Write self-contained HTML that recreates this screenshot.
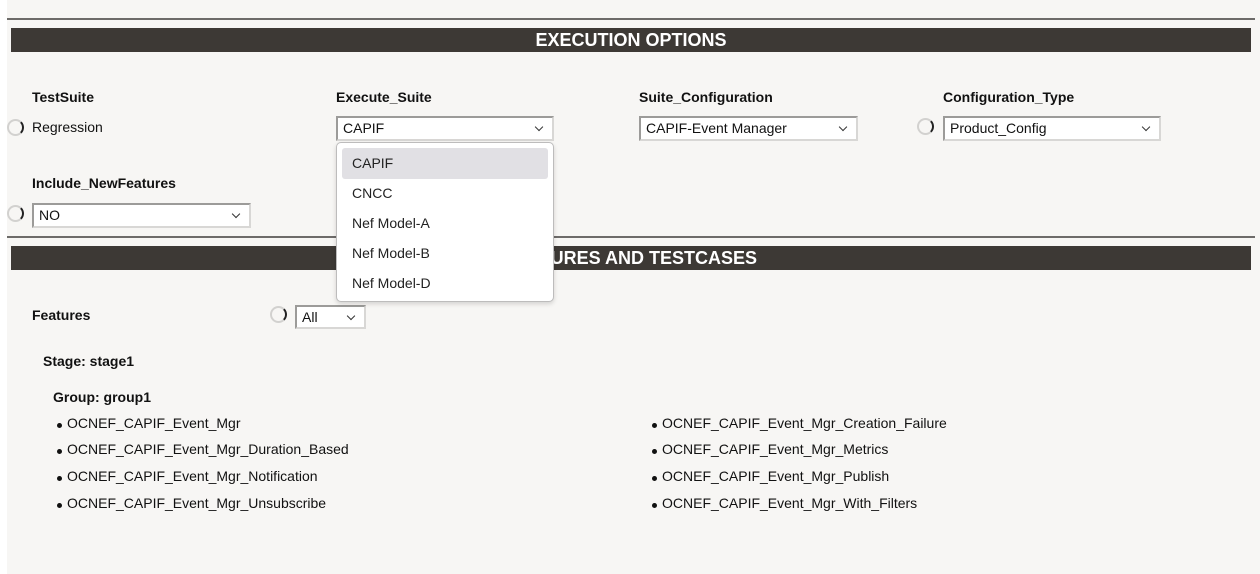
<!DOCTYPE html>
<html><head><meta charset="utf-8"><style>
body{margin:0;width:1260px;height:574px;background:#fff;font-family:"Liberation Sans",sans-serif;color:#111;overflow:hidden;position:relative}
.bg{position:absolute;left:7px;top:0;width:1253px;height:574px;background:#f7f6f4}
.a{position:absolute;white-space:nowrap}
.hr{position:absolute;left:7px;width:1248px;height:2px;background:#6d6b69}
.bar{position:absolute;left:11px;width:1240px;height:24px;background:#3d3935;color:#fff;font-weight:bold;font-size:18px;line-height:25px;text-align:center}
.lbl{font-weight:bold;font-size:14px}
.sel{position:absolute;background:#fff;border:2px solid #9c9b99;border-right-color:#d8d7d5;border-bottom-color:#d8d7d5;box-sizing:border-box;font-size:14px;line-height:21px;padding-left:5px}
.sel:after{content:"";position:absolute;right:10px;top:6px;width:5px;height:5px;border-right:1.5px solid #333;border-bottom:1.5px solid #333;transform:rotate(45deg)}
.sp{position:absolute;width:17px;height:17px;border-radius:50%;border:2px solid #d2d1cf;border-right-color:#222;box-sizing:border-box}
.li{font-size:14px}
.li:before{content:"";position:absolute;left:-10px;top:8px;width:5px;height:5px;border-radius:50%;background:#111}
.dd{position:absolute;left:336px;top:142px;width:218px;height:160px;background:#fff;border:1px solid #bdbcbc;border-radius:5px;box-sizing:border-box;box-shadow:0 2px 5px rgba(0,0,0,.15)}
.it{position:absolute;left:15px;font-size:14px;color:#222}
</style></head><body>
<div class="bg"></div>
<div class="hr" style="top:18px"></div>
<div class="bar" style="top:28px">EXECUTION OPTIONS</div>

<div class="a lbl" style="left:32px;top:89px">TestSuite</div>
<div class="a lbl" style="left:336px;top:89px">Execute_Suite</div>
<div class="a lbl" style="left:639px;top:89px">Suite_Configuration</div>
<div class="a lbl" style="left:943px;top:89px">Configuration_Type</div>
<div class="sp" style="left:7px;top:119px"></div>
<div class="a" style="left:32px;top:119px;font-size:14px">Regression</div>
<div class="sel" style="left:336px;top:116px;width:218px;height:25px">CAPIF</div>
<div class="sel" style="left:639px;top:116px;width:219px;height:25px">CAPIF-Event Manager</div>
<div class="sp" style="left:917px;top:118px"></div>
<div class="sel" style="left:943px;top:116px;width:218px;height:25px">Product_Config</div>

<div class="a lbl" style="left:32px;top:175px">Include_NewFeatures</div>
<div class="sp" style="left:7px;top:205px"></div>
<div class="sel" style="left:32px;top:203px;width:219px;height:25px">NO</div>

<div class="hr" style="top:236px"></div>
<div class="bar" style="top:246px">FEATURES AND TESTCASES</div>

<div class="a lbl" style="left:32px;top:307px">Features</div>
<div class="sp" style="left:270px;top:306px"></div>
<div class="sel" style="left:295px;top:305px;width:71px;height:24px">All</div>

<div class="a lbl" style="left:43px;top:353px">Stage: stage1</div>
<div class="a lbl" style="left:53px;top:389px">Group: group1</div>

<div class="a li" style="left:67px;top:415px">OCNEF_CAPIF_Event_Mgr</div>
<div class="a li" style="left:67px;top:441px">OCNEF_CAPIF_Event_Mgr_Duration_Based</div>
<div class="a li" style="left:67px;top:468px">OCNEF_CAPIF_Event_Mgr_Notification</div>
<div class="a li" style="left:67px;top:495px">OCNEF_CAPIF_Event_Mgr_Unsubscribe</div>
<div class="a li" style="left:662px;top:415px">OCNEF_CAPIF_Event_Mgr_Creation_Failure</div>
<div class="a li" style="left:662px;top:441px">OCNEF_CAPIF_Event_Mgr_Metrics</div>
<div class="a li" style="left:662px;top:468px">OCNEF_CAPIF_Event_Mgr_Publish</div>
<div class="a li" style="left:662px;top:495px">OCNEF_CAPIF_Event_Mgr_With_Filters</div>

<div class="dd">
<div style="position:absolute;left:5px;top:5px;width:206px;height:31px;background:#e1e0e4;border-radius:3px"></div>
<div class="it" style="top:12px">CAPIF</div>
<div class="it" style="top:42px">CNCC</div>
<div class="it" style="top:72px">Nef Model-A</div>
<div class="it" style="top:102px">Nef Model-B</div>
<div class="it" style="top:132px">Nef Model-D</div>
</div>
</body></html>
